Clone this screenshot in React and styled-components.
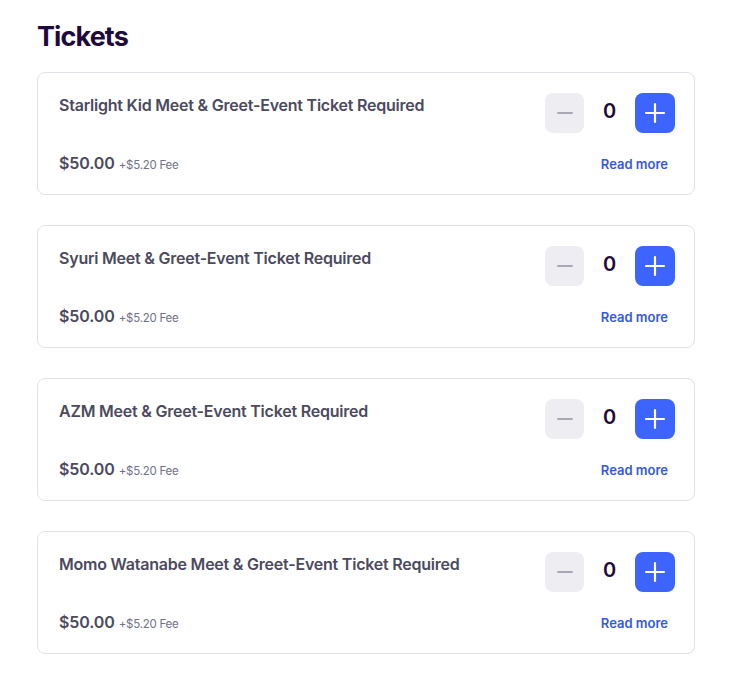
import React from "react";
import styled, { createGlobalStyle } from "styled-components";

const Global = createGlobalStyle`
  html, body { margin: 0; padding: 0; background: #ffffff; }
  body { font-family: Inter, "Noto Sans", sans-serif; -webkit-font-smoothing: antialiased; }
`;

const Page = styled.div`
  padding: 19px 0 20px 37px;
  width: 658px;
`;

const Heading = styled.h2`
  margin: 0 0 17px;
  font-size: 27px;
  line-height: 36px;
  font-weight: 700;
  letter-spacing: -0.9px;
  color: #1e0a3c;
`;

const List = styled.div`
  display: flex;
  flex-direction: column;
  gap: 30px;
`;

const Card = styled.div`
  border: 1px solid #e2e1e8;
  border-radius: 8px;
  padding: 20px 19px 19px 21px;
  display: flex;
  flex-direction: column;
  gap: 20px;
`;

const Row = styled.div`
  display: flex;
  justify-content: space-between;
  align-items: ${(p) => p.$align || "center"};
`;

const Title = styled.div`
  font-size: 16px;
  line-height: 25px;
  font-weight: 600;
  color: #4b4a5e;
  letter-spacing: -0.22px;
`;

const Controls = styled.div`
  display: flex;
  align-items: center;
`;

const StepButton = styled.button`
  width: ${(p) => (p.$primary ? "40px" : "39px")};
  height: 40px;
  border: none;
  border-radius: 8px;
  padding: 0;
  display: flex;
  align-items: center;
  justify-content: center;
  background: ${(p) => (p.$primary ? "#3d64ff" : "#eeedf2")};
  color: ${(p) => (p.$primary ? "#ffffff" : "#a9a8b3")};
`;

const Count = styled.span`
  width: 51px;
  text-align: center;
  font-size: 20px;
  line-height: 24px;
  font-weight: 600;
  color: #1e0a3c;
  padding-bottom: 5px;
`;

const Price = styled.div`
  display: flex;
  align-items: baseline;
  gap: 4px;
  line-height: 20px;
`;

const Amount = styled.span`
  font-size: 16px;
  font-weight: 600;
  color: #4b4a5e;
  letter-spacing: -0.1px;
`;

const Fee = styled.span`
  font-size: 11.5px;
  color: #6f7287;
  letter-spacing: -0.25px;
`;

const ReadMore = styled.a`
  font-size: 13px;
  font-weight: 600;
  color: #3659e3;
  text-decoration: none;
  margin-right: 7px;
  line-height: 20px;
`;

const Minus = () => (
  <svg width="18" height="18" viewBox="0 0 18 18">
    <path d="M2 9h14" stroke="currentColor" strokeWidth="2" strokeLinecap="round" />
  </svg>
);

const Plus = () => (
  <svg width="22" height="22" viewBox="0 0 22 22">
    <path d="M2 11h18M11 2v18" stroke="currentColor" strokeWidth="2.2" strokeLinecap="round" />
  </svg>
);

const tickets = [
  "Starlight Kid Meet & Greet-Event Ticket Required",
  "Syuri Meet & Greet-Event Ticket Required",
  "AZM Meet & Greet-Event Ticket Required",
  "Momo Watanabe Meet & Greet-Event Ticket Required",
];

export default function App() {
  return (
    <>
      <Global />
      <Page>
        <Heading>Tickets</Heading>
        <List>
          {tickets.map((t) => (
            <Card key={t}>
              <Row $align="flex-start">
                <Title>{t}</Title>
                <Controls>
                  <StepButton aria-label="Decrease"><Minus /></StepButton>
                  <Count>0</Count>
                  <StepButton $primary aria-label="Increase"><Plus /></StepButton>
                </Controls>
              </Row>
              <Row>
                <Price>
                  <Amount>$50.00</Amount>
                  <Fee>+$5.20 Fee</Fee>
                </Price>
                <ReadMore href="#">Read more</ReadMore>
              </Row>
            </Card>
          ))}
        </List>
      </Page>
    </>
  );
}
